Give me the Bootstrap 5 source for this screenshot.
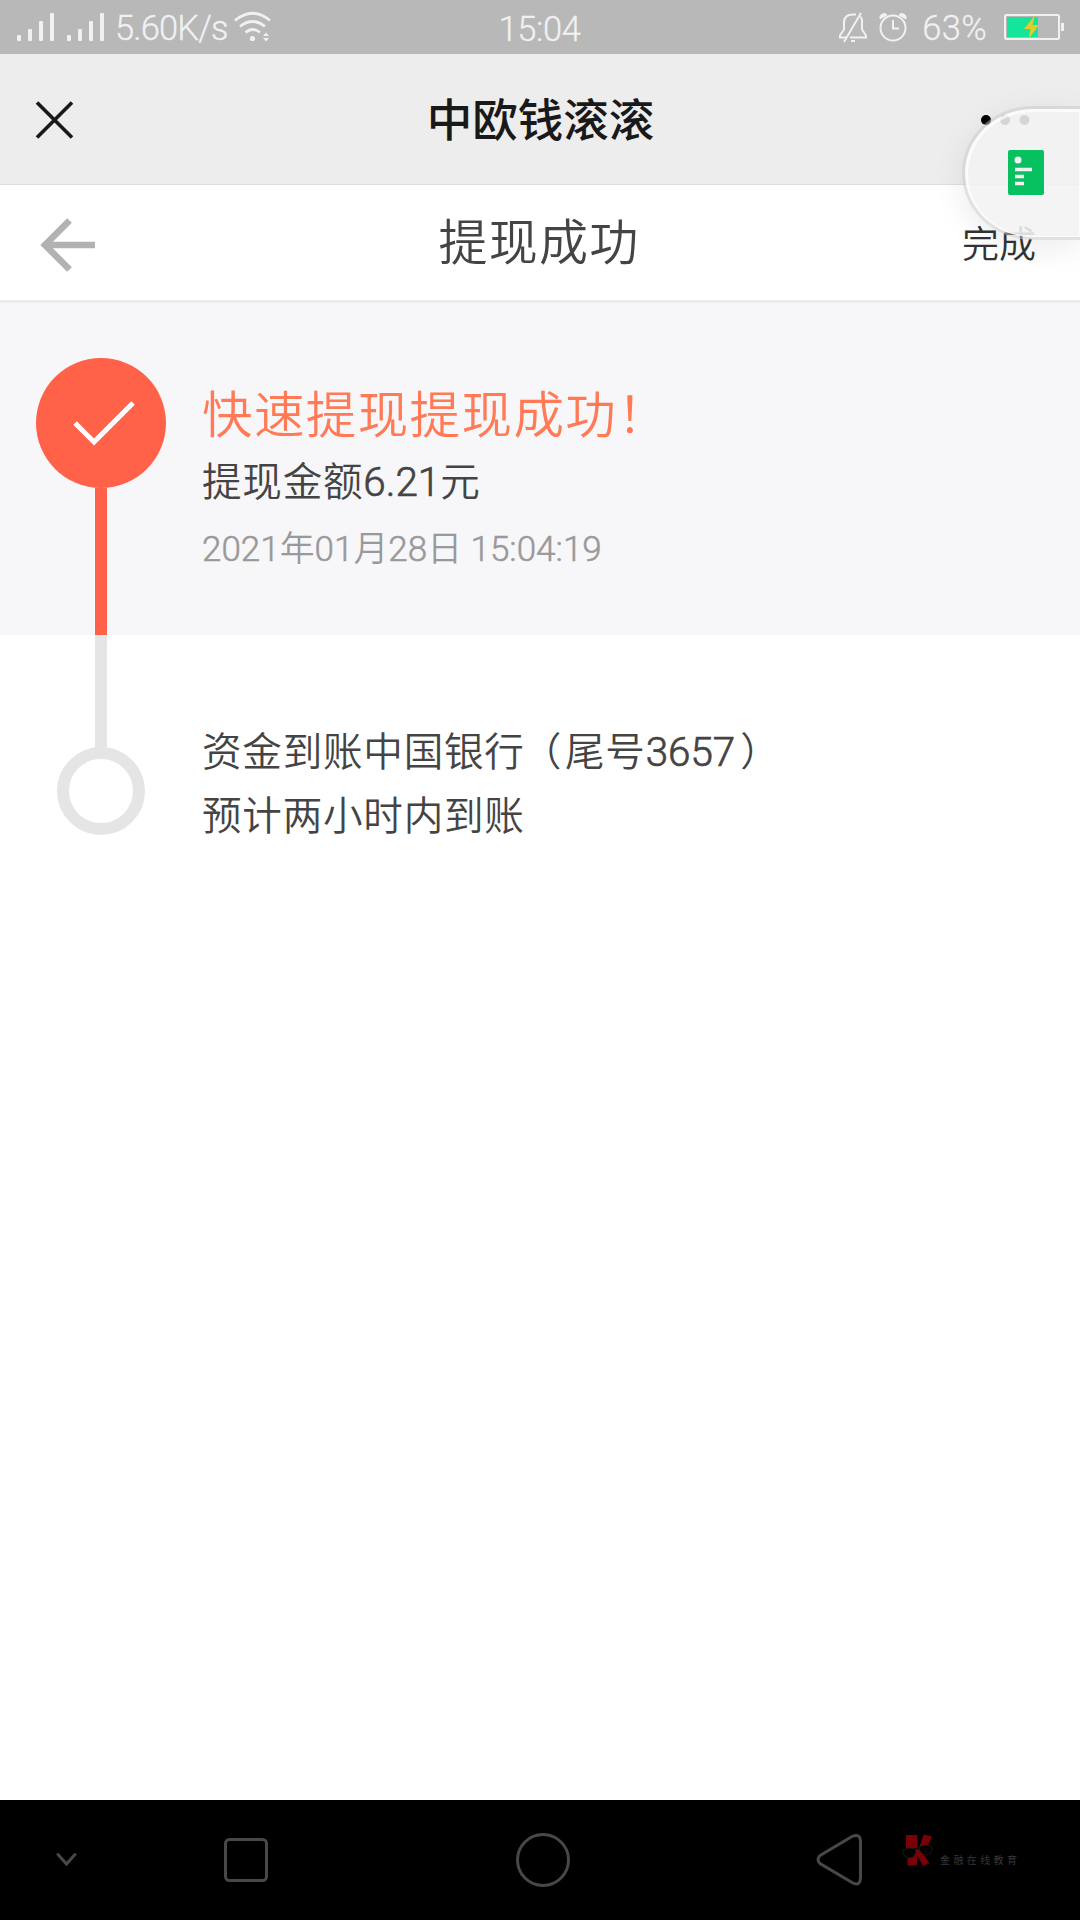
<!DOCTYPE html>
<html lang="zh-CN">
<head>
<meta charset="utf-8">
<meta name="viewport" content="width=device-width, initial-scale=1">
<title>提现成功</title>
<link href="https://cdn.jsdelivr.net/npm/bootstrap@5.3.0/dist/css/bootstrap.min.css" rel="stylesheet">
<style>
body{font-family:Roboto,"Noto Sans CJK SC",sans-serif;color:#444;background:#fff}
svg{display:block;flex:none}
.screen{width:1080px;height:1920px;overflow:hidden}
.statusbar{height:54px;background:#b8b8b8;color:#f1f1f1;font-size:34.5px;font-weight:300;line-height:54px;padding:0 16px 0 17px;-webkit-text-stroke:.3px #f1f1f1}
.side{flex:1 1 0}
.speed{margin-left:10px;letter-spacing:-.85px;padding-top:2px}
.clock{letter-spacing:-.4px;padding-top:4px;margin-left:-2px}
.pct{margin:0 16px 0 13px;padding-top:2px;letter-spacing:.3px}
.wx-head{height:131px;background:#ededed;border-bottom:1px solid #dedede;padding:1px 50px 0 35px}
.wx-title{font-size:45.5px;font-weight:500;color:#191919;line-height:66px;padding-top:5px;margin:0 -16px 0 0}
.app-head{height:118px;border-bottom:3px solid #ececec;padding:4px 44px 0 40px}
.app-title{font-size:49px;letter-spacing:1.2px;font-weight:350;line-height:74px;padding-left:2px;margin-top:-2px}
.done{font-size:37px;font-weight:350;color:#333;padding-top:2px}
.step-now{height:332px;background:#f7f7fa;padding-left:36px}
.step-next{height:200px;padding-left:36px}
.rail{width:130px}
.dot-now{width:130px;height:130px;background:#ff6149;margin-top:55px}
.line-now{width:12px;background:#ff6149}
.line-next{width:12px;height:113px;background:#e5e5e5}
.dot-next{width:88px;height:88px;border:12px solid #e5e5e5;margin-top:-1px}
.info{padding-left:36px;font-weight:350}
.pending{padding-top:86px}
.head-line{font-size:50.5px;letter-spacing:1.4px;line-height:76px;color:#ff7a55;margin-top:75px}
.body-line{font-size:39.6px;letter-spacing:.75px;line-height:64px}
.step-now .body-line{margin-top:-3px}
.num{font-weight:350;-webkit-text-stroke:.7px currentColor;font-size:40.4px;letter-spacing:0}
.date-line{font-size:34.9px;line-height:52px;color:#999;margin-top:9px}
.date-line .num{font-size:35px;-webkit-text-stroke-width:.5px}
.paren-open{margin-left:-3px;margin-right:3px}
.paren-close{margin-left:5px}
.navbar-keys{height:120px;background:#000}
.brand-mark{font-size:10px;line-height:14px;letter-spacing:3.4px;color:#383838;padding-top:2px}
.floating{top:106px;right:0;width:118px;height:134px;border:3px solid rgba(195,195,195,.5);border-right:0;border-radius:71px 0 0 71px / 67px 0 0 67px;background:rgba(243,243,243,.88);background-clip:padding-box;box-shadow:0 8px 32px rgba(0,0,0,.08),inset 1px 1px 0 2px rgba(255,255,255,.65);padding-left:42px}
</style>
<script src="https://cdn.jsdelivr.net/npm/bootstrap@5.3.0/dist/js/bootstrap.bundle.min.js"></script>
</head>
<body>
<div class="screen d-flex flex-column position-relative">
  <div class="statusbar d-flex align-items-center">
    <div class="side d-flex align-items-center">
      <svg width="88" height="54" fill="#f1f1f1"><rect y="35" width="4" height="6" rx="1"/><rect x="11" y="29" width="4" height="12" rx="1"/><rect x="22" y="21" width="4" height="20" rx="1"/><rect x="33" y="13" width="4" height="28" rx="1"/><rect x="50" y="35" width="4" height="6" rx="1"/><rect x="61" y="29" width="4" height="12" rx="1"/><rect x="72" y="21" width="4" height="20" rx="1"/><rect x="83" y="13" width="4" height="28" rx="1"/></svg>
      <span class="speed">5.60K/s</span>
      <svg class="ms-1" width="40" height="54" viewBox="-2 0 40 54" fill="none" stroke="#f1f1f1" stroke-width="2.8"><path d="M1 20.500Q18.500 6 36 20.500M6 26.500Q18.500 16.500 31 26.500M11.500 32.500Q18.500 26.500 26 32.500"/><circle cx="18.500" cy="38.500" r="2.600" fill="#f1f1f1" stroke="none"/><path d="M29 36l3-3.500 3 3.500zM29 38l3 3.500 3-3.500z" fill="#f1f1f1" stroke="none"/></svg>
    </div>
    <span class="clock">15:04</span>
    <div class="side d-flex align-items-center justify-content-end">
      <svg width="70" height="54" viewBox="839 0 70 54" fill="none" stroke="#f1f1f1" stroke-width="2"><path d="M850 37.500h16v-2l-4-6v-8q0-3-1.500-5M846 37.500h-6v-2l4-6v-7q0-8 9-8h3"/><path d="M844 42l17-29M851 41h4"/><circle cx="893" cy="28" r="12.500"/><path d="M893 20v8.500h6"/><path d="M880 19q-1-5 5-5.500l2 1.500zM906 19q1-5-5-5.500l-2 1.500z" fill="#f1f1f1" stroke-width="1"/></svg>
      <span class="pct">63%</span>
      <svg class="battery" width="61" height="54" viewBox="1003 0 61 54"><rect x="1005" y="15" width="54" height="24" rx="1.500" fill="none" stroke="#f1f1f1" stroke-width="2"/><path d="M1007 17h31v20h-31z" fill="#14e59a"/><path d="M1061 23h3v8h-3z" fill="#f1f1f1"/><path d="M1035 15l-11 14h6.500l-2 10 10.500-14h-6.500z" fill="#e1cc29"/></svg>
    </div>
  </div>

  <header class="wx-head d-flex align-items-center justify-content-between">
    <div class="side"><svg width="40" height="40" stroke="#191919" stroke-width="3.600"><path d="M2 2.500l35 35M37 2.500l-35 35"/></svg></div>
    <div class="wx-title">中欧钱滚滚</div>
    <div class="side d-flex justify-content-end"><svg width="50" height="12"><circle cx="6" cy="6" r="5"/><circle cx="25" cy="6" r="5"/><circle cx="44.500" cy="6" r="5"/></svg></div>
  </header>

  <nav class="app-head d-flex align-items-center">
    <div class="side"><svg width="56" height="56" fill="none" stroke="#b2b2b2" stroke-width="6.600"><path d="M29.500 3.500L5 28l24.500 24.500M6 28h49"/></svg></div>
    <div class="app-title">提现成功</div>
    <div class="side text-end done">完成</div>
  </nav>

  <section class="step-now d-flex">
    <div class="rail d-flex flex-column align-items-center">
      <div class="dot-now rounded-circle flex-shrink-0"><svg width="130" height="130" fill="none" stroke="#fff" stroke-width="5"><path d="M39 65l19 19 39-39"/></svg></div>
      <div class="line-now flex-grow-1"></div>
    </div>
    <div class="info">
      <div class="head-line">快速提现提现成功！</div>
      <div class="body-line">提现金额<span class="num">6.21</span>元</div>
      <div class="date-line"><span class="num">2021</span>年<span class="num">01</span>月<span class="num">28</span>日 <span class="num">15:04:19</span></div>
    </div>
  </section>

  <section class="step-next d-flex">
    <div class="rail d-flex flex-column align-items-center">
      <div class="line-next"></div>
      <div class="dot-next rounded-circle"></div>
    </div>
    <div class="info pending">
      <div class="body-line">资金到账中国银行<span class="paren-open">（</span>尾号<span class="num">3657</span><span class="paren-close">）</span></div>
      <div class="body-line">预计两小时内到账</div>
    </div>
  </section>

  <footer class="navbar-keys mt-auto d-flex align-items-center">
    <svg width="900" height="120" fill="none" stroke="#484848" stroke-width="3"><path d="M58 54.500l8.500 9.500 8.500-9.500" stroke-linecap="round"/><rect x="225.500" y="39.500" width="41" height="41" rx="4"/><circle cx="543" cy="60" r="25.500"/><path d="M820 55.500L852 36.500Q860 33 860.500 41V78Q860 87 852 82.500L820 63.500Q816 59.500 820 55.500z"/></svg>
    <svg width="40" height="120" viewBox="900 0 40 120"><path d="M906 35h11.500v13h-11.500zM923.500 34.500l8.500 2-4.500 10-8 1zM907.500 57.500l7-5 2.500-4 3.500 2 9 12.500-6.500 3-6-11v10.500h-9.500z" fill="#780006"/><path d="M902.500 50q6-3.500 13.500-1 0 9-7 9-6-1-6.500-8zM919 47q7-4 13 0 0 8-6 8-6-1-7-8z" fill="#000" stroke="#1b1b1b"/></svg>
    <span class="brand-mark">金融在线教育</span>
  </footer>

  <div class="floating position-absolute d-flex align-items-center"><svg class="note" width="38" height="48"><rect x="1" y="1" width="36" height="45" rx="2" fill="#07c160"/><circle cx="11" cy="11" r="3.500" fill="#f2f2f2"/><path d="M8 20.500h17M8 27.500h9M8 34.500h9" stroke="#f2f2f2" stroke-width="3.500"/></svg></div>
</div>
</body>
</html>
